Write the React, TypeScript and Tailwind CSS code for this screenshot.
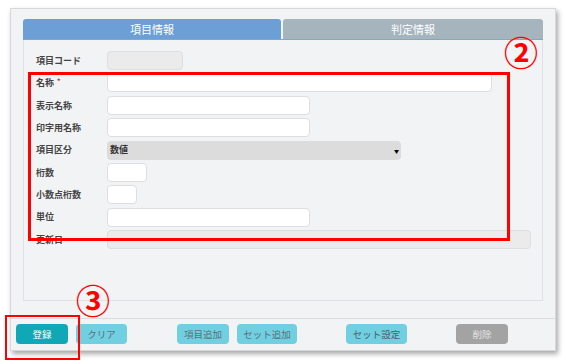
import React from 'react';

const rows: { label: string; width: string; kind: 'input' | 'disabled' | 'select'; required?: boolean; value?: string }[] = [
  { label: '項目コード', width: 'w-[76px]', kind: 'disabled' },
  { label: '名称', width: 'w-[385px]', kind: 'input', required: true },
  { label: '表示名称', width: 'w-[203px]', kind: 'input' },
  { label: '印字用名称', width: 'w-[203px]', kind: 'input' },
  { label: '項目区分', width: 'w-[294px]', kind: 'select', value: '数値' },
  { label: '桁数', width: 'w-[40px]', kind: 'input' },
  { label: '小数点桁数', width: 'w-[30px]', kind: 'input' },
  { label: '単位', width: 'w-[203px]', kind: 'input' },
  { label: '更新日', width: 'w-[424px]', kind: 'disabled' },
];

function Field({ row }: { row: (typeof rows)[number] }) {
  if (row.kind === 'select') {
    return (
      <div className={`${row.width} h-[19px] rounded-[4px] bg-[#dcdcdc] flex items-center justify-between pl-[3px] pr-[2px]`}>
        <span className="text-[9px] font-bold text-[#333]">{row.value}</span>
        <span className="text-[5px] leading-none text-black">▼</span>
      </div>
    );
  }
  const bg = row.kind === 'disabled' ? 'bg-[#ebebeb]' : 'bg-white';
  return <div className={`${row.width} h-[19px] rounded-[4px] border border-[#dedede] ${bg}`} />;
}

export default function App() {
  return (
    <div className="relative w-[566px] h-[364px] bg-white font-['Noto_Sans_CJK_JP','Noto_Sans',sans-serif] overflow-hidden">
      {/* Panel */}
      <div className="ml-[10px] mt-[8px] w-[546px] h-[343px] border border-[#d8d8d8] bg-[#f2f3f5] shadow-[2px_3px_5px_rgba(0,0,0,0.35)] flex flex-col">
        <div className="ml-[12px] mt-[10px] w-[520px] h-[282px] flex flex-col">
          {/* Tabs */}
          <div className="flex gap-[2px] h-[21px] border-b border-[#7ea7d6]">
            <div className="w-[258px] rounded-t-[3px] bg-[#6b9fd6] flex items-center justify-center text-[11px] text-white">
              項目情報
            </div>
            <div className="flex-1 rounded-t-[3px] bg-[#a5b4bd] flex items-center justify-center text-[11px] text-white">
              判定情報
            </div>
          </div>
          <div className="flex-1 border-x border-b border-[#dfe1e4] pt-[11px] pl-[12px] flex flex-col gap-[3.375px]">
            {rows.map((row) => (
              <div key={row.label} className="flex items-center h-[19px]">
                <div className="w-[71px] text-[9px] font-bold text-[#444] flex items-start">
                  {row.label}
                  {row.required && <span className="text-[#e02020] ml-[3px] text-[7px]">*</span>}
                </div>
                <Field row={row} />
              </div>
            ))}
          </div>
        </div>
        {/* Footer */}
        <div className="mt-[17px] border-t border-[#dcdcdc] pt-[5px] pl-[5px] flex items-start text-[9.5px]">
          <button className="w-[52px] h-[20px] rounded-[4px] bg-[#10a7b6] text-white">登録</button>
          <button className="ml-[8px] w-[51px] h-[20px] rounded-[4px] bg-[#70cfe1] text-[#5b6f78]">クリア</button>
          <button className="ml-[50px] w-[52px] h-[20px] rounded-[4px] bg-[#70cfe1] text-[#5b6f78]">項目追加</button>
          <button className="ml-[8px] w-[60px] h-[20px] rounded-[4px] bg-[#70cfe1] text-[#5b6f78]">セット追加</button>
          <button className="ml-[49px] w-[61px] h-[20px] rounded-[4px] bg-[#70cfe1] text-[#4b5f68]">セット設定</button>
          <button className="ml-[49px] w-[52px] h-[20px] rounded-[4px] bg-[#a3a3a3] text-[#e4e4e4]">削除</button>
        </div>
      </div>

      {/* Annotations */}
      <div className="absolute left-[28px] top-[72px] w-[482px] h-[169px] border-[3px] border-[#ff0000]" />
      <div className="absolute left-[504px] top-[35px] text-[34px] leading-none font-bold text-[#ff0000]">②</div>
      <div className="absolute left-[5px] top-[315px] w-[75px] h-[45px] border-[2px] border-[#ff0000]" />
      <div className="absolute left-[76px] top-[283px] text-[34px] leading-none font-bold text-[#ff0000]">③</div>
    </div>
  );
}
